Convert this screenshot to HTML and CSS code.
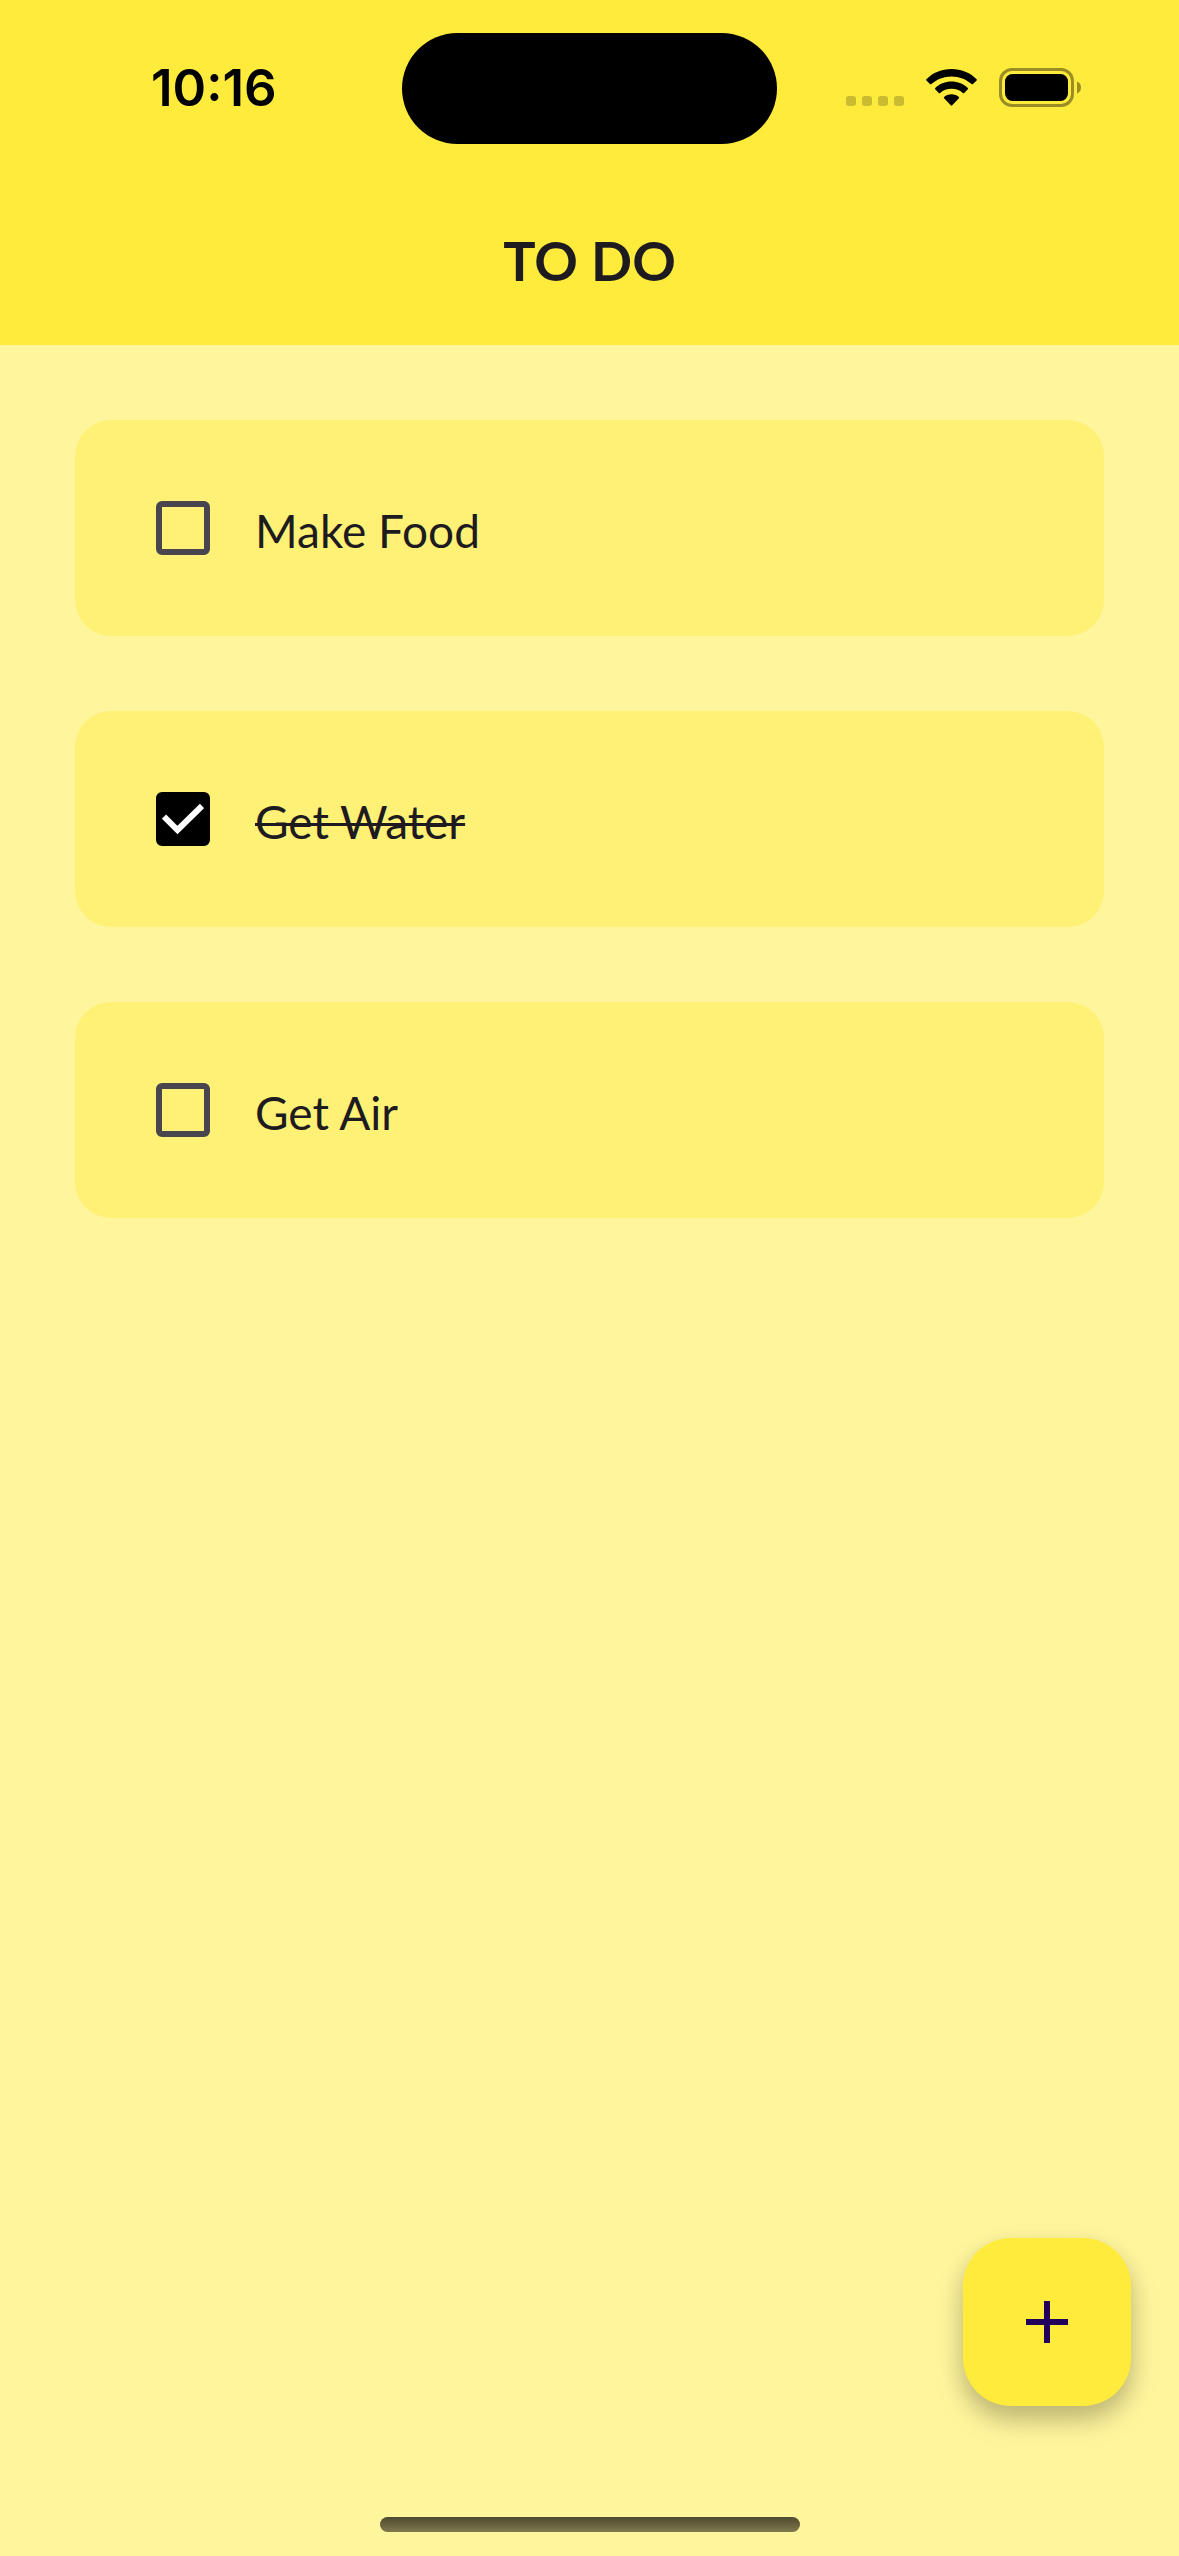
FILE: index.html
```html
<!DOCTYPE html>
<html lang="en">
<head>
  <meta charset="utf-8">
  <meta name="viewport" content="width=device-width, initial-scale=1">
  <title>To Do</title>
  <link rel="stylesheet" href="styles.css">
</head>
<body>
  <div class="screen">
    <header class="header">
      <div class="status-bar">
        <time class="clock">10:16</time>
        <div class="island"></div>
        <div class="indicators">
          <svg class="signal" width="58" height="38" viewBox="0 0 58 38" aria-hidden="true">
            <rect x="0" y="27" width="10" height="10" rx="3"/>
            <rect x="16" y="27" width="10" height="10" rx="3"/>
            <rect x="32" y="27" width="10" height="10" rx="3"/>
            <rect x="48" y="27" width="10" height="10" rx="3"/>
          </svg>
          <svg class="wifi" width="51" height="38" viewBox="0 0 51 38" aria-hidden="true">
            <path d="M25.5 0C35.2 0 44.2 3.700 50.600 10.200Q51.200 10.900 50.600 11.500L47 15.100Q46.300 15.700 45.600 15.100C40.300 10.200 33.200 7.400 25.500 7.400S10.700 10.200 5.400 15.100Q4.700 15.700 4 15.100L.4 11.500Q-.2 10.900 .4 10.200C6.800 3.700 15.800 0 25.500 0Z"/>
            <path d="M25.500 12.500C31.800 12.500 37.500 14.900 41.800 18.900Q42.400 19.600 41.800 20.300L38.200 23.900Q37.500 24.500 36.800 23.900C33.800 21.300 29.900 19.800 25.500 19.800S17.200 21.300 14.200 23.900Q13.500 24.500 12.800 23.900L9.200 20.300Q8.600 19.600 9.200 18.900C13.500 14.900 19.200 12.500 25.500 12.500Z"/>
            <path d="M25.500 25.200C28.400 25.200 31 26.200 32.900 27.900Q33.600 28.600 32.900 29.300L26.200 36.300Q25.500 37 24.800 36.300L18.100 29.300Q17.400 28.600 18.100 27.900C20 26.200 22.600 25.200 25.500 25.200Z"/>
          </svg>
          <svg class="battery" width="82" height="39" viewBox="0 0 82 39" aria-hidden="true">
            <rect class="battery-case" x="1.500" y="1.500" width="72" height="36" rx="11.500"/>
            <rect x="6" y="6" width="63" height="27" rx="7.500"/>
            <path class="battery-tip" d="M78 13.500Q82 15 82 19.500T78 25.500Z"/>
          </svg>
        </div>
      </div>
      <h1 class="title">TO DO</h1>
    </header>

    <main class="content">
      <ul class="tasks">
        <li>
          <label class="task">
            <input class="task-check" type="checkbox">
            <span class="task-name">Make Food</span>
          </label>
        </li>
        <li>
          <label class="task">
            <input class="task-check" type="checkbox" checked>
            <span class="task-name">Get Water</span>
          </label>
        </li>
        <li>
          <label class="task">
            <input class="task-check" type="checkbox">
            <span class="task-name">Get Air</span>
          </label>
        </li>
      </ul>
    </main>

    <button class="add-button" type="button" aria-label="Add task">
      <svg width="42" height="42" viewBox="0 0 42 42" aria-hidden="true">
        <path d="M18 0h6v18h18v6H24v18h-6V24H0v-6h18z"/>
      </svg>
    </button>

    <div class="home-indicator"></div>
  </div>
</body>
</html>
```
FILE: styles.css
```css
* {
  box-sizing: border-box;
}

body {
  margin: 0;
  background: #fff59d;
  color: #1d1b20;
  font-family: Lato, "Liberation Sans", sans-serif;
}

.screen {
  display: flex;
  flex-direction: column;
  min-height: 100vh;
}

/* Header */

.header {
  background: #ffeb3b;
}

.status-bar {
  display: grid;
  grid-template-columns: 1fr 375px 1fr;
  align-items: center;
  height: 177px;
  color: #000;
}

.clock {
  padding: 0 0 2px 151px;
  font: 600 51px/60px Inter, "Liberation Sans", sans-serif;
}

.island {
  height: 111px;
  border-radius: 56px;
  background: #000;
}

.indicators {
  display: flex;
  align-items: center;
  justify-content: flex-end;
  gap: 22px;
  padding: 0 98px 2px 0;
}

.signal {
  opacity: 0.2;
}

.battery-case {
  fill: none;
  stroke: #000;
  stroke-width: 3;
  opacity: 0.4;
}

.battery-tip {
  opacity: 0.4;
}

.title {
  margin: 0;
  font-size: 54px;
  font-weight: 700;
  line-height: 168px;
  text-align: center;
}

/* Task list */

.content {
  flex: 1;
  padding: 75px;
}

.tasks {
  display: flex;
  flex-direction: column;
  gap: 75px;
  margin: 0;
  padding: 0;
  list-style: none;
}

.task {
  display: flex;
  align-items: center;
  gap: 45px;
  min-height: 216px;
  padding: 72px 81px;
  border-radius: 36px;
  background: #fff176;
}

.task-check {
  flex: none;
  appearance: none;
  width: 54px;
  height: 54px;
  margin: 0;
  border: 6px solid #49454f;
  border-radius: 6px;
}

.task-check:checked {
  border-color: #000;
  background: #000 url("data:image/svg+xml,%3Csvg xmlns='http://www.w3.org/2000/svg' viewBox='0 0 42 42'%3E%3Cpath d='M2 18.500 15.500 32 40 8' fill='none' stroke='white' stroke-width='6'/%3E%3C/svg%3E") center / 42px 42px no-repeat;
}

.task-name {
  padding-top: 6px;
  font-size: 46px;
  line-height: 54px;
}

.task-check:checked + .task-name {
  text-decoration: line-through;
  text-decoration-thickness: 3px;
  text-decoration-skip-ink: none;
}

/* Floating action button */

.add-button {
  position: fixed;
  right: 48px;
  bottom: 150px;
  display: grid;
  place-items: center;
  width: 168px;
  height: 168px;
  padding: 0;
  border: 0;
  border-radius: 48px;
  background: #ffeb3b;
  fill: #21005d;
  box-shadow:
    0 12px 24px rgb(0 0 0 / 22%),
    0 15px 36px rgb(0 0 0 / 8%);
}

.home-indicator {
  align-self: center;
  width: 420px;
  height: 15px;
  margin-bottom: 24px;
  border-radius: 8px;
  background: linear-gradient(#4f4a30, #80784e);
}
```
